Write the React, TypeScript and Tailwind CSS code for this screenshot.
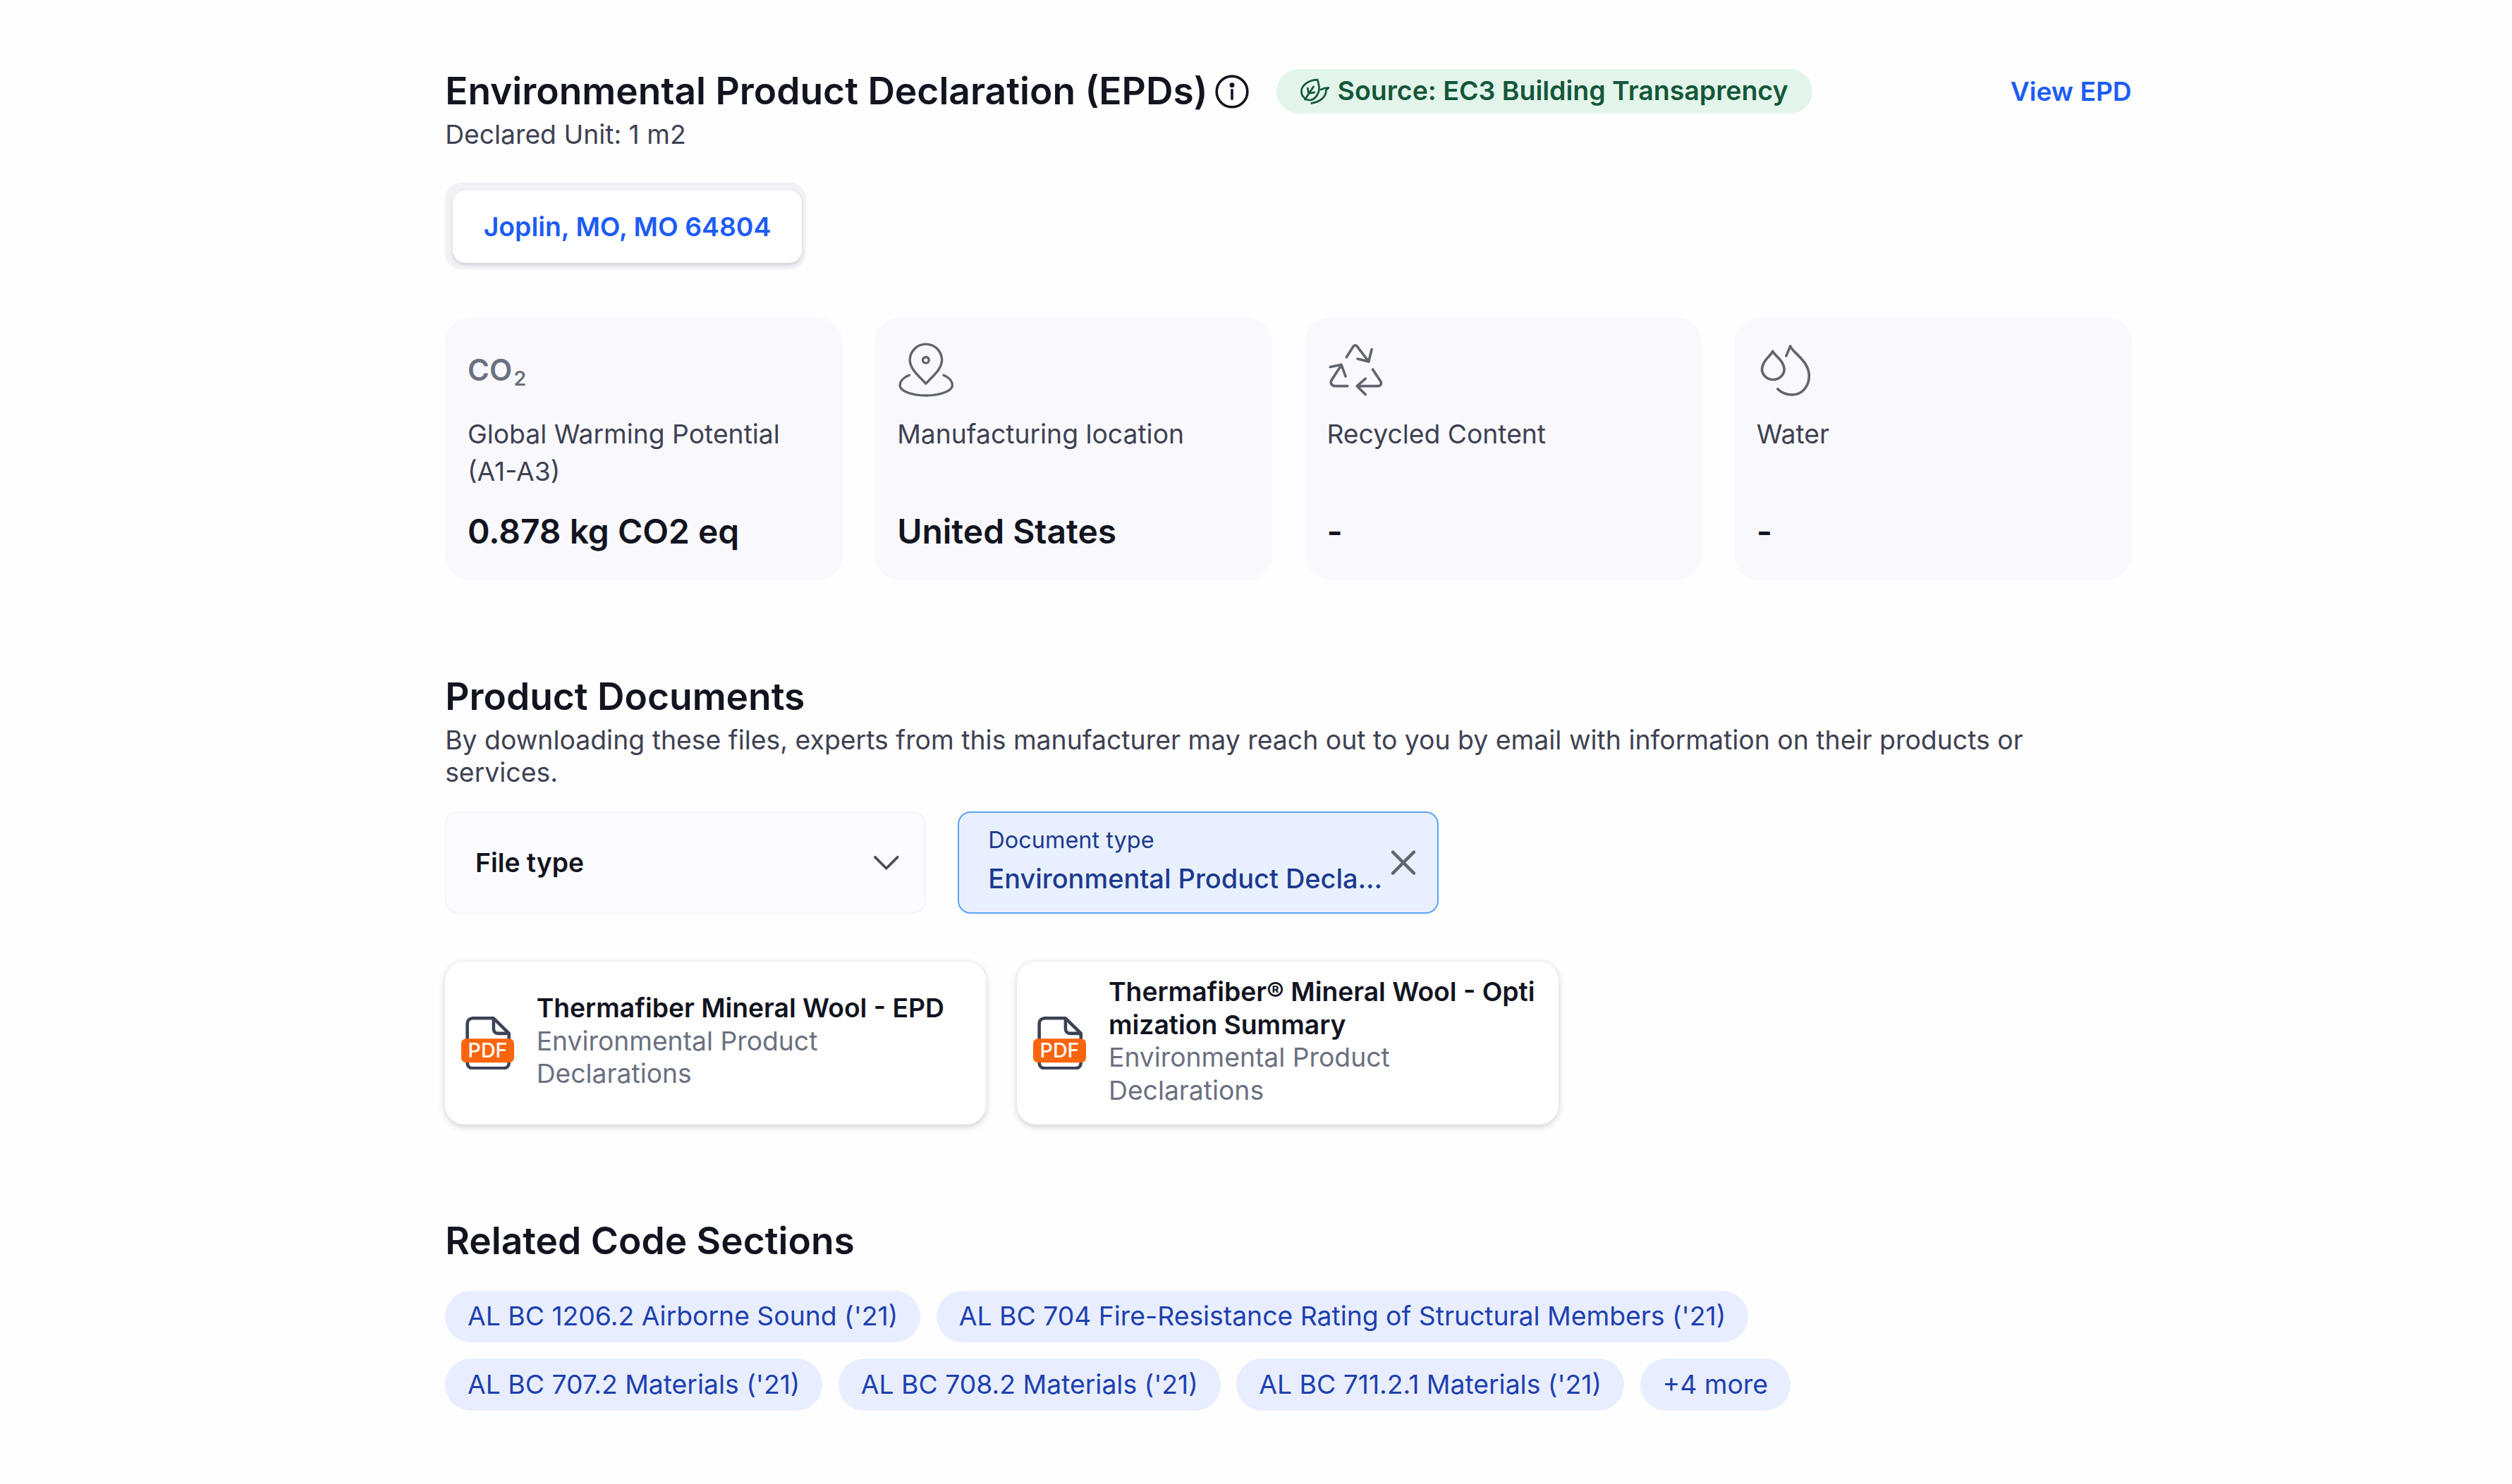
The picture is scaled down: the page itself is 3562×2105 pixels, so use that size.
import React from "react";
import { ChevronDown, X } from "lucide-react";

function InfoIcon() {
  return (
    <svg viewBox="0 0 22 22" className="w-[22px] h-[22px] shrink-0" fill="none" stroke="#12141f" strokeWidth="1.6" strokeLinecap="round">
      <circle cx="11" cy="11" r="9.6" />
      <path d="M11 10v5.5" />
      <circle cx="11" cy="6.9" r="0.7" fill="#12141f" />
    </svg>
  );
}

function LeafIcon() {
  return (
    <svg viewBox="0 0 20 20" className="w-5 h-5 shrink-0" fill="none" stroke="#14573a" strokeWidth="1.2" strokeLinecap="round" strokeLinejoin="round">
      <path d="M11.5 2.7C7 2.7 1.5 5.5 1.5 10C1.5 13 4 15.4 6.6 15.4C10 15.4 13 11 12.5 7C12.3 5 12 4 11.5 2.7Z" />
      <path d="M3.7 15L9 7M6 11.2L5.4 8M6 11.2L9.6 10.6" />
      <path d="M13.7 8.8L15.8 8L18.4 7.7L16.8 9.3C17.2 12.5 14 16.4 7.8 17.3" />
    </svg>
  );
}

function PinIcon() {
  return (
    <svg viewBox="0 0 36 36" className="w-9 h-9" fill="none" stroke="#63656e" strokeWidth="1.5" strokeLinecap="round" strokeLinejoin="round">
      <path d="M18 26.5C14 22 8 17.5 8 11.8a10 10 0 0 1 20 0C28 17.5 22 22 18 26.5Z" />
      <circle cx="18" cy="11.8" r="1.9" />
      <path d="M7.7 21.2C4 22.5 1.8 25 1.8 27.6C1.8 31 9 33.9 18 33.9S34.5 31 34.5 27.6C34.5 25 32.5 22.5 29 21.2" />
    </svg>
  );
}

function RecycleIcon() {
  return (
    <svg viewBox="0 0 36 36" className="w-9 h-9" fill="none" stroke="#63656e" strokeWidth="1.6" strokeLinecap="round" strokeLinejoin="round">
      <path d="M12.5 9.9L16.6 3.4C17.3 2.3 18.5 2.3 19.2 3.4L26.3 12.7" />
      <path d="M28.2 5.1L26.3 12.7L19.4 11" />
      <path d="M13.1 28H5.6C3.2 28 2 26.2 3.2 24.2L9.2 15" />
      <path d="M2.3 16.1L9.2 14.6L11.9 22" />
      <path d="M28.8 17.6L33.5 24.6C34.8 26.4 33.8 28 31.8 28H19.4" />
      <path d="M24.3 23.4L19 28L24.3 33.2" />
    </svg>
  );
}

function WaterIcon() {
  return (
    <svg viewBox="0 0 36 36" className="w-9 h-9" fill="none" stroke="#63656e" strokeWidth="1.6" strokeLinecap="round" strokeLinejoin="round">
      <path d="M10 6.2C9 9 3.3 12 3.3 18A7 6.8 0 0 0 17.2 18C17.2 12 11 9 10 6.2Z" />
      <path d="M18.4 9.2L21 3C22 7 32.7 12 32.7 21.7C32.7 28.5 28 33.4 22.4 33.4C18.5 33.4 15.2 32 13.1 29.8" />
    </svg>
  );
}

function Co2Icon() {
  return (
    <div className="flex h-9 items-center text-[#6b7080] font-semibold">
      <span className="text-[18.5px] leading-none">CO</span>
      <span className="text-[12.5px] leading-none mt-[11px] ml-px">2</span>
    </div>
  );
}

function PdfIcon() {
  return (
    <svg viewBox="0 0 33 33" className="w-[33px] h-[33px] shrink-0" fill="none">
      <path d="M20.2 1H7.3C5.2 1 3.8 2.4 3.8 4.5V28.8C3.8 30.9 5.2 32.3 7.3 32.3H26.3C28.4 32.3 29.8 30.9 29.8 28.8V10.5Z" stroke="#3b4254" strokeWidth="2" strokeLinejoin="round" />
      <path d="M20.2 1V7.5C20.2 9.3 21.2 10.5 23 10.5H29.8" stroke="#3b4254" strokeWidth="2" strokeLinejoin="round" />
      <rect x="0" y="13.7" width="33" height="15" rx="3" fill="#f9650f" />
      <text x="16.5" y="25.7" textAnchor="middle" fontSize="12.6" fontWeight="500" fill="#ffffff" fontFamily="Inter, sans-serif">PDF</text>
    </svg>
  );
}

const stats = [
  { icon: <Co2Icon />, label: "Global Warming Potential (A1-A3)", value: "0.878 kg CO2 eq" },
  { icon: <PinIcon />, label: "Manufacturing location", value: "United States" },
  { icon: <RecycleIcon />, label: "Recycled Content", value: "-" },
  { icon: <WaterIcon />, label: "Water", value: "-" },
];

const docs = [
  { title: "Thermafiber Mineral Wool - EPD" },
  { title: "Thermafiber® Mineral Wool - Optimization Summary" },
];

const chipRows = [
  ["AL BC 1206.2 Airborne Sound ('21)", "AL BC 704 Fire-Resistance Rating of Structural Members ('21)"],
  ["AL BC 707.2 Materials ('21)", "AL BC 708.2 Materials ('21)", "AL BC 711.2.1 Materials ('21)", "+4 more"],
];

export default function App() {
  return (
    <div className="[zoom:2.2727] h-[926px] bg-[#fefefe] font-['Inter',sans-serif] text-[#12141f] overflow-hidden">
      <div className="ml-[277.7px] w-[1052.3px] pt-[41px]">
        <div className="flex h-8 items-center">
          <h2 className="text-[23.45px] font-semibold leading-8 whitespace-nowrap">Environmental Product Declaration (EPDs)</h2>
          <span className="ml-1"><InfoIcon /></span>
          <div className="ml-[17px] flex h-[28px] items-center gap-1 rounded-full bg-[#e3f5ea] pl-[14px] pr-[15px] text-[16.5px] font-semibold text-[#14573a] whitespace-nowrap">
            <LeafIcon />
            <span>Source: EC3 Building Transaprency</span>
          </div>
          <a className="ml-auto text-[16.35px] font-semibold text-[#1c5cf5]">View EPD</a>
        </div>
        <p className="text-[16.4px] leading-6 text-[#3f4152] -mt-px">Declared Unit: 1 m2</p>

        <div className="mt-[18px] inline-flex rounded-[10px] bg-[#f2f1f6] pt-[5px] pb-[4px] pl-[5px] pr-[3px]">
          <div className="flex h-[45px] items-center rounded-lg bg-white px-[19px] text-[16.45px] font-semibold text-[#1c5cf5] shadow-[0_1px_2px_rgba(60,60,80,0.18)]">
            Joplin, MO, MO 64804
          </div>
        </div>

        <div className="mt-[30px] grid grid-cols-4 gap-5">
          {stats.map((s) => (
            <div key={s.label} className="flex h-[164px] flex-col rounded-2xl bg-[#f9f9fd] px-[14px] pt-[15px]">
              {s.icon}
              <p className="mt-[10px] h-[47px] text-[16.4px] leading-[23.5px] text-[#3f4152]">{s.label}</p>
              <p className="mt-[12px] text-[21.1px] leading-7 font-semibold">{s.value}</p>
            </div>
          ))}
        </div>

        <h2 className="mt-[57px] text-[23.45px] font-semibold leading-8">Product Documents</h2>
        <p className="text-[16.45px] leading-5 text-[#3f4152] mt-px">
          By downloading these files, experts from this manufacturer may reach out to you by email with information on their products or services.
        </p>

        <div className="mt-[14.5px] flex gap-5">
          <div className="flex h-16 w-[300px] items-center justify-between rounded-lg border border-[#f4f3f7] bg-[#fbfafe] pl-[18px] pr-[10px]">
            <span className="text-[16.4px] font-semibold">File type</span>
            <ChevronDown className="h-[28px] w-[28px] text-[#4b4d57]" strokeWidth={1.4} />
          </div>
          <div className="flex h-16 w-[300px] items-center justify-between rounded-lg border border-[#5ea2f5] bg-[#e8f0ff] pl-[18px] pr-[8px]">
            <div className="pb-1 text-[#1c3a8f]">
              <p className="text-[14.3px] leading-5">Document type</p>
              <p className="mt-1 text-[16.7px] leading-5 font-medium whitespace-nowrap">Environmental Product Decla...</p>
            </div>
            <X className="h-[27px] w-[27px] text-[#63656e]" strokeWidth={1.8} />
          </div>
        </div>

        <div className="mt-[29.5px] flex gap-[19.5px]">
          {docs.map((d) => (
            <div key={d.title} className="flex h-[102px] w-[337.5px] items-center gap-[14px] rounded-xl bg-white pl-[10px] pr-[13px] shadow-[0_1px_4px_rgba(40,40,60,0.22)]">
              <PdfIcon />
              <div className="min-w-0 flex-1 pb-[2px]">
                <p className="text-[16.4px] leading-[20.5px] font-semibold break-all">{d.title}</p>
                <p className="text-[16.4px] leading-[20.5px] text-[#6b7080]">Environmental Product Declarations</p>
              </div>
            </div>
          ))}
        </div>

        <h2 className="mt-[56.5px] text-[23.45px] font-semibold leading-8">Related Code Sections</h2>

        <div className="mt-[15px] flex flex-col gap-[10px]">
          {chipRows.map((row, i) => (
            <div key={i} className="flex gap-[10px]">
              {row.map((c) => (
                <span key={c} className="flex h-[32.5px] items-center rounded-full bg-[#e8eeff] px-[14px] text-[16.42px] text-[#1e40af] whitespace-nowrap">
                  {c}
                </span>
              ))}
            </div>
          ))}
        </div>
      </div>
    </div>
  );
}
